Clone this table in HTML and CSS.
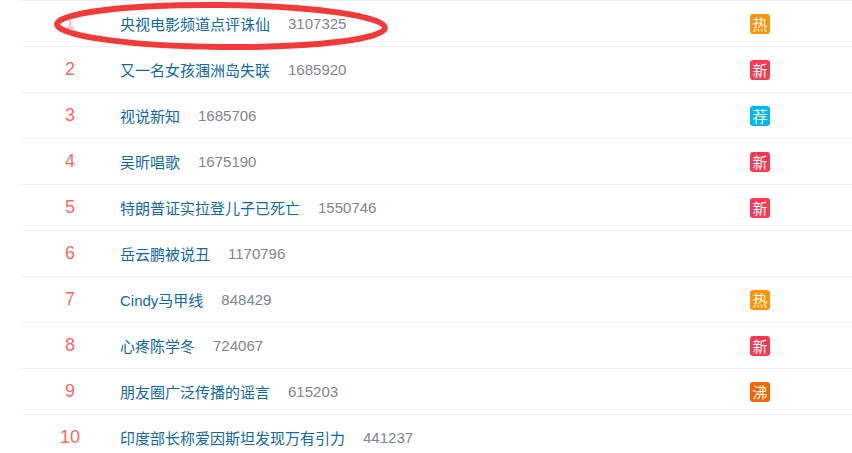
FILE: index.html
```html
<!DOCTYPE html>
<html lang="zh-CN">
<head>
    <meta charset="UTF-8">
    <meta name="viewport" content="width=device-width, initial-scale=1.0">
    <title>热搜榜</title>
    <link rel="stylesheet" href="styles.css">
</head>
<body>
    <div class="board">
        <ul class="list">
            <li class="row">
                <span class="rank faded">1</span>
                <span class="main"><a class="title" href="#">央视电影频道点评诛仙</a><span class="count">3107325</span></span>
                <span class="tag hot">热</span>
            </li>
            <li class="row">
                <span class="rank">2</span>
                <span class="main"><a class="title" href="#">又一名女孩涠洲岛失联</a><span class="count">1685920</span></span>
                <span class="tag new">新</span>
            </li>
            <li class="row">
                <span class="rank">3</span>
                <span class="main"><a class="title" href="#">视说新知</a><span class="count">1685706</span></span>
                <span class="tag rec">荐</span>
            </li>
            <li class="row">
                <span class="rank">4</span>
                <span class="main"><a class="title" href="#">吴昕唱歌</a><span class="count">1675190</span></span>
                <span class="tag new">新</span>
            </li>
            <li class="row">
                <span class="rank">5</span>
                <span class="main"><a class="title" href="#">特朗普证实拉登儿子已死亡</a><span class="count">1550746</span></span>
                <span class="tag new">新</span>
            </li>
            <li class="row">
                <span class="rank">6</span>
                <span class="main"><a class="title" href="#">岳云鹏被说丑</a><span class="count">1170796</span></span>
                <span class="tag none"></span>
            </li>
            <li class="row">
                <span class="rank">7</span>
                <span class="main"><a class="title" href="#">Cindy马甲线</a><span class="count">848429</span></span>
                <span class="tag hot">热</span>
            </li>
            <li class="row">
                <span class="rank">8</span>
                <span class="main"><a class="title" href="#">心疼陈学冬</a><span class="count">724067</span></span>
                <span class="tag new">新</span>
            </li>
            <li class="row">
                <span class="rank">9</span>
                <span class="main"><a class="title" href="#">朋友圈广泛传播的谣言</a><span class="count">615203</span></span>
                <span class="tag boil">沸</span>
            </li>
            <li class="row">
                <span class="rank">10</span>
                <span class="main"><a class="title" href="#">印度部长称爱因斯坦发现万有引力</a><span class="count">441237</span></span>
                <span class="tag none"></span>
            </li>
        </ul>

        <!-- 手画的红圈 -->
        <svg class="circle" width="852" height="60" viewBox="0 0 852 60">
            <ellipse cx="221" cy="26" rx="164" ry="21" fill="none" stroke="#f33a3a" stroke-width="6" transform="rotate(0.6 221 26)"/>
        </svg>
    </div>
</body>
</html>
```

FILE: styles.css
```css
body {
    margin: 0;
    background: #fff;
    font-family: "Liberation Sans", Arial, "Noto Sans CJK SC", sans-serif;
}
.board {
    position: relative;
    width: 852px;
    height: 453px;
    overflow: hidden;
}
.list {
    list-style: none;
    margin: 0 0 0 20px;
    padding: 0;
}
.row {
    display: flex;
    align-items: center;
    height: 45px;
    border-top: 1px solid #f0f0f0;
}
.rank {
    width: 100px;
    text-align: center;
    font-size: 18px;
    color: #f26d64;
}
.rank.faded { color: #f7b3b0; }
.main {
    flex: 1;
    display: flex;
    align-items: center;
    font-size: 15px;
}
.title {
    color: #12689f;
    text-decoration: none;
}
.count {
    margin-left: 18px;
    color: #808590;
}
.tag {
    width: 20px;
    height: 20px;
    margin-right: 82px;
    border-radius: 3px;
    color: #fff;
    font-size: 15px;
    line-height: 20px;
    text-align: center;
    font-family: "Noto Sans CJK SC", sans-serif;
}
.tag.hot { background: #ff9406; }
.tag.new { background: #ff3852; }
.tag.rec { background: #00b7ee; }
.tag.boil { background: #f86400; }
.tag.none { background: none; }
.circle {
    position: absolute;
    left: 0;
    top: 0;
}
```
